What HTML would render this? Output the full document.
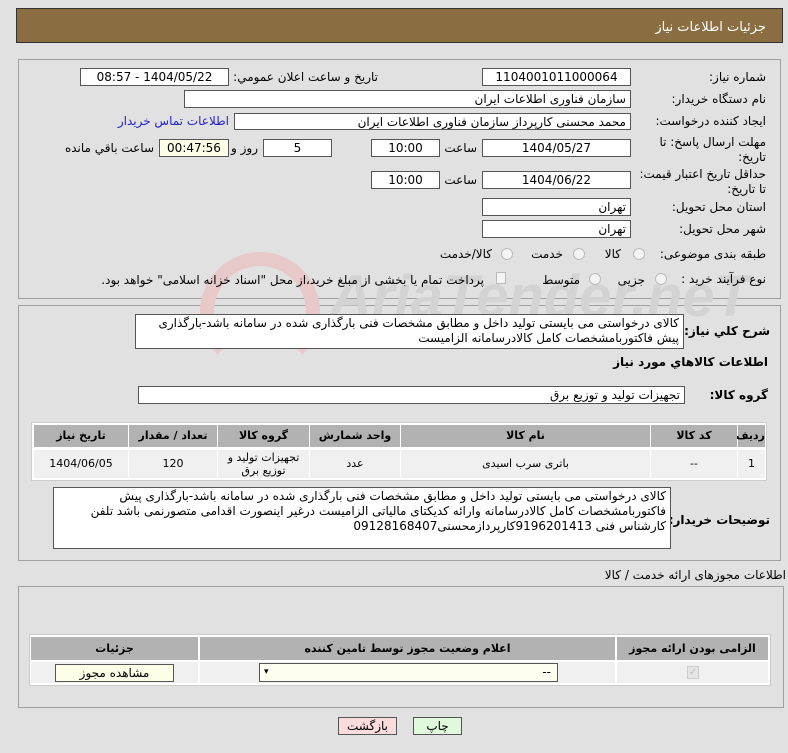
<!DOCTYPE html>
<html dir="rtl"><head><meta charset="utf-8"><style>
body{margin:0;width:788px;height:753px;background:#e1e1e1;position:relative;overflow:hidden;font-family:"DejaVu Sans","Liberation Sans",sans-serif;font-size:12px;color:#000}
div,span{position:absolute;box-sizing:border-box}
.hdr{left:16px;top:8px;width:767px;height:35px;background:#8b6d42;border:1px solid #333;color:#fff;font-size:13px;text-align:right;padding:11px 16px 0 0}
.pn{border:1px solid #a0a0a0}
.in{background:#fff;border:1px solid #555;text-align:center;line-height:16px;white-space:nowrap;overflow:hidden}
.r{text-align:right;padding-right:4px}
.lb{white-space:nowrap;text-align:right}
.rad{width:12px;height:12px;border-radius:50%;border:1px solid #bbb;background:#f4f4f4}
.th{background:#b2b2b2;font-weight:bold;text-align:center;font-size:11px}
.td{background:#f0f0f0;text-align:center;font-size:11px}
.wm{direction:ltr;font-family:"Liberation Sans",sans-serif;font-weight:bold;font-style:italic;white-space:nowrap;overflow:hidden}
</style></head><body>
<div class="hdr">جزئیات اطلاعات نیاز</div>
<div class="pn" style="left:18px;top:59px;width:763px;height:240px"></div>
<div class="pn" style="left:18px;top:305px;width:763px;height:256px"></div>

<div style="left:200px;top:252px;width:120px;height:120px;border-radius:50%;border:14px solid #e8c9c9;border-bottom-color:transparent"></div>
<div class="wm" style="left:330px;top:262px;width:440px;height:70px;font-size:58px;color:#d3d3d3;line-height:70px">AriaTender.neT</div>

<div class="lb" style="right:22px;top:70px">شماره نیاز:</div>
<div class="in" style="left:482px;top:68px;width:149px;height:18px">1104001011000064</div>
<div class="lb" style="right:410px;top:70px">تاریخ و ساعت اعلان عمومي:</div>
<div class="in" style="left:80px;top:68px;width:149px;height:18px">1404/05/22 - 08:57</div>

<div class="lb" style="right:22px;top:92px">نام دستگاه خریدار:</div>
<div class="in r" style="left:184px;top:90px;width:447px;height:18px">سازمان فناوری اطلاعات ایران</div>

<div class="lb" style="right:22px;top:114px">ایجاد کننده درخواست:</div>
<div class="in r" style="left:234px;top:113px;width:397px;height:17px">محمد محسنی کارپرداز سازمان فناوری اطلاعات ایران</div>
<div class="lb" style="right:559px;top:114px;color:#2222cc">اطلاعات تماس خریدار</div>

<div class="lb" style="right:22px;top:135px;line-height:15px">مهلت ارسال پاسخ: تا<br>تاریخ:</div>
<div class="in" style="left:482px;top:139px;width:149px;height:18px">1404/05/27</div>
<div class="lb" style="right:311px;top:141px">ساعت</div>
<div class="in" style="left:371px;top:139px;width:69px;height:18px">10:00</div>
<div class="in" style="left:263px;top:139px;width:69px;height:18px">5</div>
<div class="lb" style="right:530px;top:141px">روز و</div>
<div class="in" style="left:159px;top:139px;width:70px;height:18px;background:#fdfde8">00:47:56</div>
<div class="lb" style="right:634px;top:141px">ساعت باقي مانده</div>

<div class="lb" style="right:22px;top:167px;line-height:15px">حداقل تاریخ اعتبار قیمت:<br>تا تاریخ:</div>
<div class="in" style="left:482px;top:171px;width:149px;height:18px">1404/06/22</div>
<div class="lb" style="right:311px;top:173px">ساعت</div>
<div class="in" style="left:371px;top:171px;width:69px;height:18px">10:00</div>

<div class="lb" style="right:22px;top:200px">استان محل تحویل:</div>
<div class="in r" style="left:482px;top:198px;width:149px;height:18px">تهران</div>
<div class="lb" style="right:22px;top:222px">شهر محل تحویل:</div>
<div class="in r" style="left:482px;top:220px;width:149px;height:18px">تهران</div>

<div class="lb" style="right:22px;top:247px">طبقه بندی موضوعی:</div>
<div class="rad" style="left:633px;top:248px"></div><div class="lb" style="right:167px;top:247px">کالا</div>
<div class="rad" style="left:573px;top:248px"></div><div class="lb" style="right:225px;top:247px">خدمت</div>
<div class="rad" style="left:501px;top:248px"></div><div class="lb" style="right:296px;top:247px">کالا/خدمت</div>

<div class="lb" style="right:22px;top:272px">نوع فرآیند خرید :</div>
<div class="rad" style="left:655px;top:273px"></div><div class="lb" style="right:143px;top:273px">جزیی</div>
<div class="rad" style="left:589px;top:273px"></div><div class="lb" style="right:208px;top:273px">متوسط</div>
<div style="left:496px;top:272px;width:10px;height:12px;border:1px solid #bbb;background:#f4f4f4"></div>
<div class="lb" style="right:304px;top:273px">پرداخت تمام یا بخشی از مبلغ خرید،از محل "اسناد خزانه اسلامی" خواهد بود.</div>

<div class="lb" style="right:18px;top:324px;font-weight:bold;font-size:12px">شرح کلي نیاز:</div>
<div class="in r" style="left:135px;top:314px;width:549px;height:35px;white-space:normal;text-align:right;line-height:15px;padding-top:1px">کالای درخواستی می بایستی تولید داخل و مطابق مشخصات فنی بارگذاری شده در سامانه باشد-بارگذاری پیش فاکتوربامشخصات کامل کالادرسامانه الزامیست</div>
<div class="lb" style="right:20px;top:355px;font-weight:bold">اطلاعات کالاهاي مورد نیاز</div>
<div class="lb" style="right:20px;top:388px;font-weight:bold">گروه کالا:</div>
<div class="in r" style="left:138px;top:386px;width:547px;height:18px">تجهیزات تولید و توزیع برق</div>

<div style="left:31px;top:422px;width:736px;height:59px;background:#fff;border:1px solid #ccc"></div>
<div class="th" style="left:738px;top:425px;width:27px;height:22px;line-height:22px">ردیف</div>
<div class="th" style="left:651px;top:425px;width:86px;height:22px;line-height:22px">کد کالا</div>
<div class="th" style="left:401px;top:425px;width:249px;height:22px;line-height:22px">نام کالا</div>
<div class="th" style="left:310px;top:425px;width:90px;height:22px;line-height:22px">واحد شمارش</div>
<div class="th" style="left:218px;top:425px;width:91px;height:22px;line-height:22px">گروه کالا</div>
<div class="th" style="left:129px;top:425px;width:88px;height:22px;line-height:22px">تعداد / مقدار</div>
<div class="th" style="left:34px;top:425px;width:94px;height:22px;line-height:22px">تاریخ نیاز</div>
<div class="td" style="left:738px;top:450px;width:27px;height:28px;line-height:28px">1</div>
<div class="td" style="left:651px;top:450px;width:86px;height:28px;line-height:28px">--</div>
<div class="td" style="left:401px;top:450px;width:249px;height:28px;line-height:28px">باتری سرب اسیدی</div>
<div class="td" style="left:310px;top:450px;width:90px;height:28px;line-height:28px">عدد</div>
<div class="td" style="left:218px;top:450px;width:91px;height:28px;line-height:13px;padding-top:1px">تجهیزات تولید و<br>توزیع برق</div>
<div class="td" style="left:129px;top:450px;width:88px;height:28px;line-height:28px">120</div>
<div class="td" style="left:34px;top:450px;width:94px;height:28px;line-height:28px">1404/06/05</div>

<div class="lb" style="right:18px;top:513px;font-weight:bold">توضیحات خریدار:</div>
<div class="in r" style="left:53px;top:487px;width:618px;height:62px;white-space:normal;text-align:right;line-height:15px;padding-top:1px">کالای درخواستی می بایستی تولید داخل و مطابق مشخصات فنی بارگذاری شده در سامانه باشد-بارگذاری پیش فاکتوربامشخصات کامل کالادرسامانه وارائه کدیکتای مالیاتی الزامیست درغیر اینصورت اقدامی متصورنمی باشد تلفن کارشناس فنی 9196201413کارپردازمحسنی09128168407</div>

<div class="lb" style="right:2px;top:568px">اطلاعات مجوزهای ارائه خدمت / کالا</div>
<div class="pn" style="left:18px;top:586px;width:766px;height:122px"></div>
<div style="left:29px;top:634px;width:742px;height:52px;background:#fff;border:1px solid #ccc"></div>
<div class="th" style="left:617px;top:637px;width:151px;height:23px;line-height:23px">الزامی بودن ارائه مجوز</div>
<div class="th" style="left:200px;top:637px;width:415px;height:23px;line-height:23px">اعلام وضعیت مجوز توسط تامین کننده</div>
<div class="th" style="left:31px;top:637px;width:167px;height:23px;line-height:23px">جزئیات</div>
<div class="td" style="left:617px;top:662px;width:151px;height:21px"></div>
<div class="td" style="left:200px;top:662px;width:415px;height:21px"></div>
<div class="td" style="left:31px;top:662px;width:167px;height:21px"></div>
<div style="left:687px;top:666px;width:12px;height:13px;border:1px solid #ccc;background:#e6e6e6;color:#bbb;font-size:10px;line-height:12px;text-align:center">✓</div>
<div class="in" style="left:259px;top:663px;width:299px;height:19px;background:#fdfdf0;text-align:right;padding-right:6px">--<span style="left:4px;top:0;font-size:9px">▾</span></div>
<div class="in" style="left:55px;top:664px;width:119px;height:18px;background:#fdfde8">مشاهده مجوز</div>

<div class="in" style="left:338px;top:717px;width:59px;height:18px;background:#fbdcdc">بازگشت</div>
<div class="in" style="left:413px;top:717px;width:49px;height:18px;background:#e0f8dc">چاپ</div>
</body></html>
